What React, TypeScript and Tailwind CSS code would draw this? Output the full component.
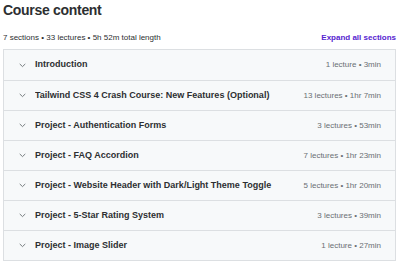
import React from "react";

type Section = {
    title: string;
    meta: string;
};

const sections: Section[] = [
    { title: "Introduction", meta: "1 lecture • 3min" },
    { title: "Tailwind CSS 4 Crash Course: New Features (Optional)", meta: "13 lectures • 1hr 7min" },
    { title: "Project - Authentication Forms", meta: "3 lectures • 53min" },
    { title: "Project - FAQ Accordion", meta: "7 lectures • 1hr 23min" },
    { title: "Project - Website Header with Dark/Light Theme Toggle", meta: "5 lectures • 1hr 20min" },
    { title: "Project - 5-Star Rating System", meta: "3 lectures • 39min" },
    { title: "Project - Image Slider", meta: "1 lecture • 27min" },
];

const Chevron: React.FC = () => (
    <svg width="7" height="5" viewBox="0 0 7 5" fill="none" className="shrink-0">
        <path d="M1 1.2 L3.5 3.6 L6 1.2" stroke="#6a6f73" strokeWidth="0.9" strokeLinecap="round" strokeLinejoin="round" />
    </svg>
);

export default function App() {
    return (
        <div
            className="w-[400px] h-[264px] bg-white overflow-hidden text-[#2d2f31]"
            style={{ fontFamily: '"Liberation Sans", Arial, sans-serif' }}
        >
            <div className="pl-[3px] pr-[4px]">
                {/* 見出し */}
                <h2 className="h-[20px] leading-[20px] text-[14px] font-bold tracking-[-0.3px]">
                    Course content
                </h2>

                <div className="mt-[12px] h-[12px] flex items-center justify-between">
                    <span className="text-[8px] leading-[12px]">
                        7 sections • 33 lectures • 5h 52m total length
                    </span>
                    <button className="text-[8px] leading-[12px] font-bold text-[#5624d0]">
                        Expand all sections
                    </button>
                </div>

                {/* セクション一覧 */}
                <div className="mt-[5px] border border-[#dcdfe2] bg-[#f7f9fa]">
                    {sections.map((s, i) => (
                        <div
                            key={s.title}
                            className={
                                "flex items-center h-[30px] pl-[15px] pr-[14px] " +
                                (i === 0 ? "h-[29px]" : "border-t border-[#dcdfe2]")
                            }
                        >
                            <Chevron />
                            <span className="ml-[9px] text-[9px] font-bold flex-1 truncate">
                                {s.title}
                            </span>
                            <span className="text-[8px] text-[#6a6f73] whitespace-nowrap">
                                {s.meta}
                            </span>
                        </div>
                    ))}
                </div>
            </div>
        </div>
    );
}
